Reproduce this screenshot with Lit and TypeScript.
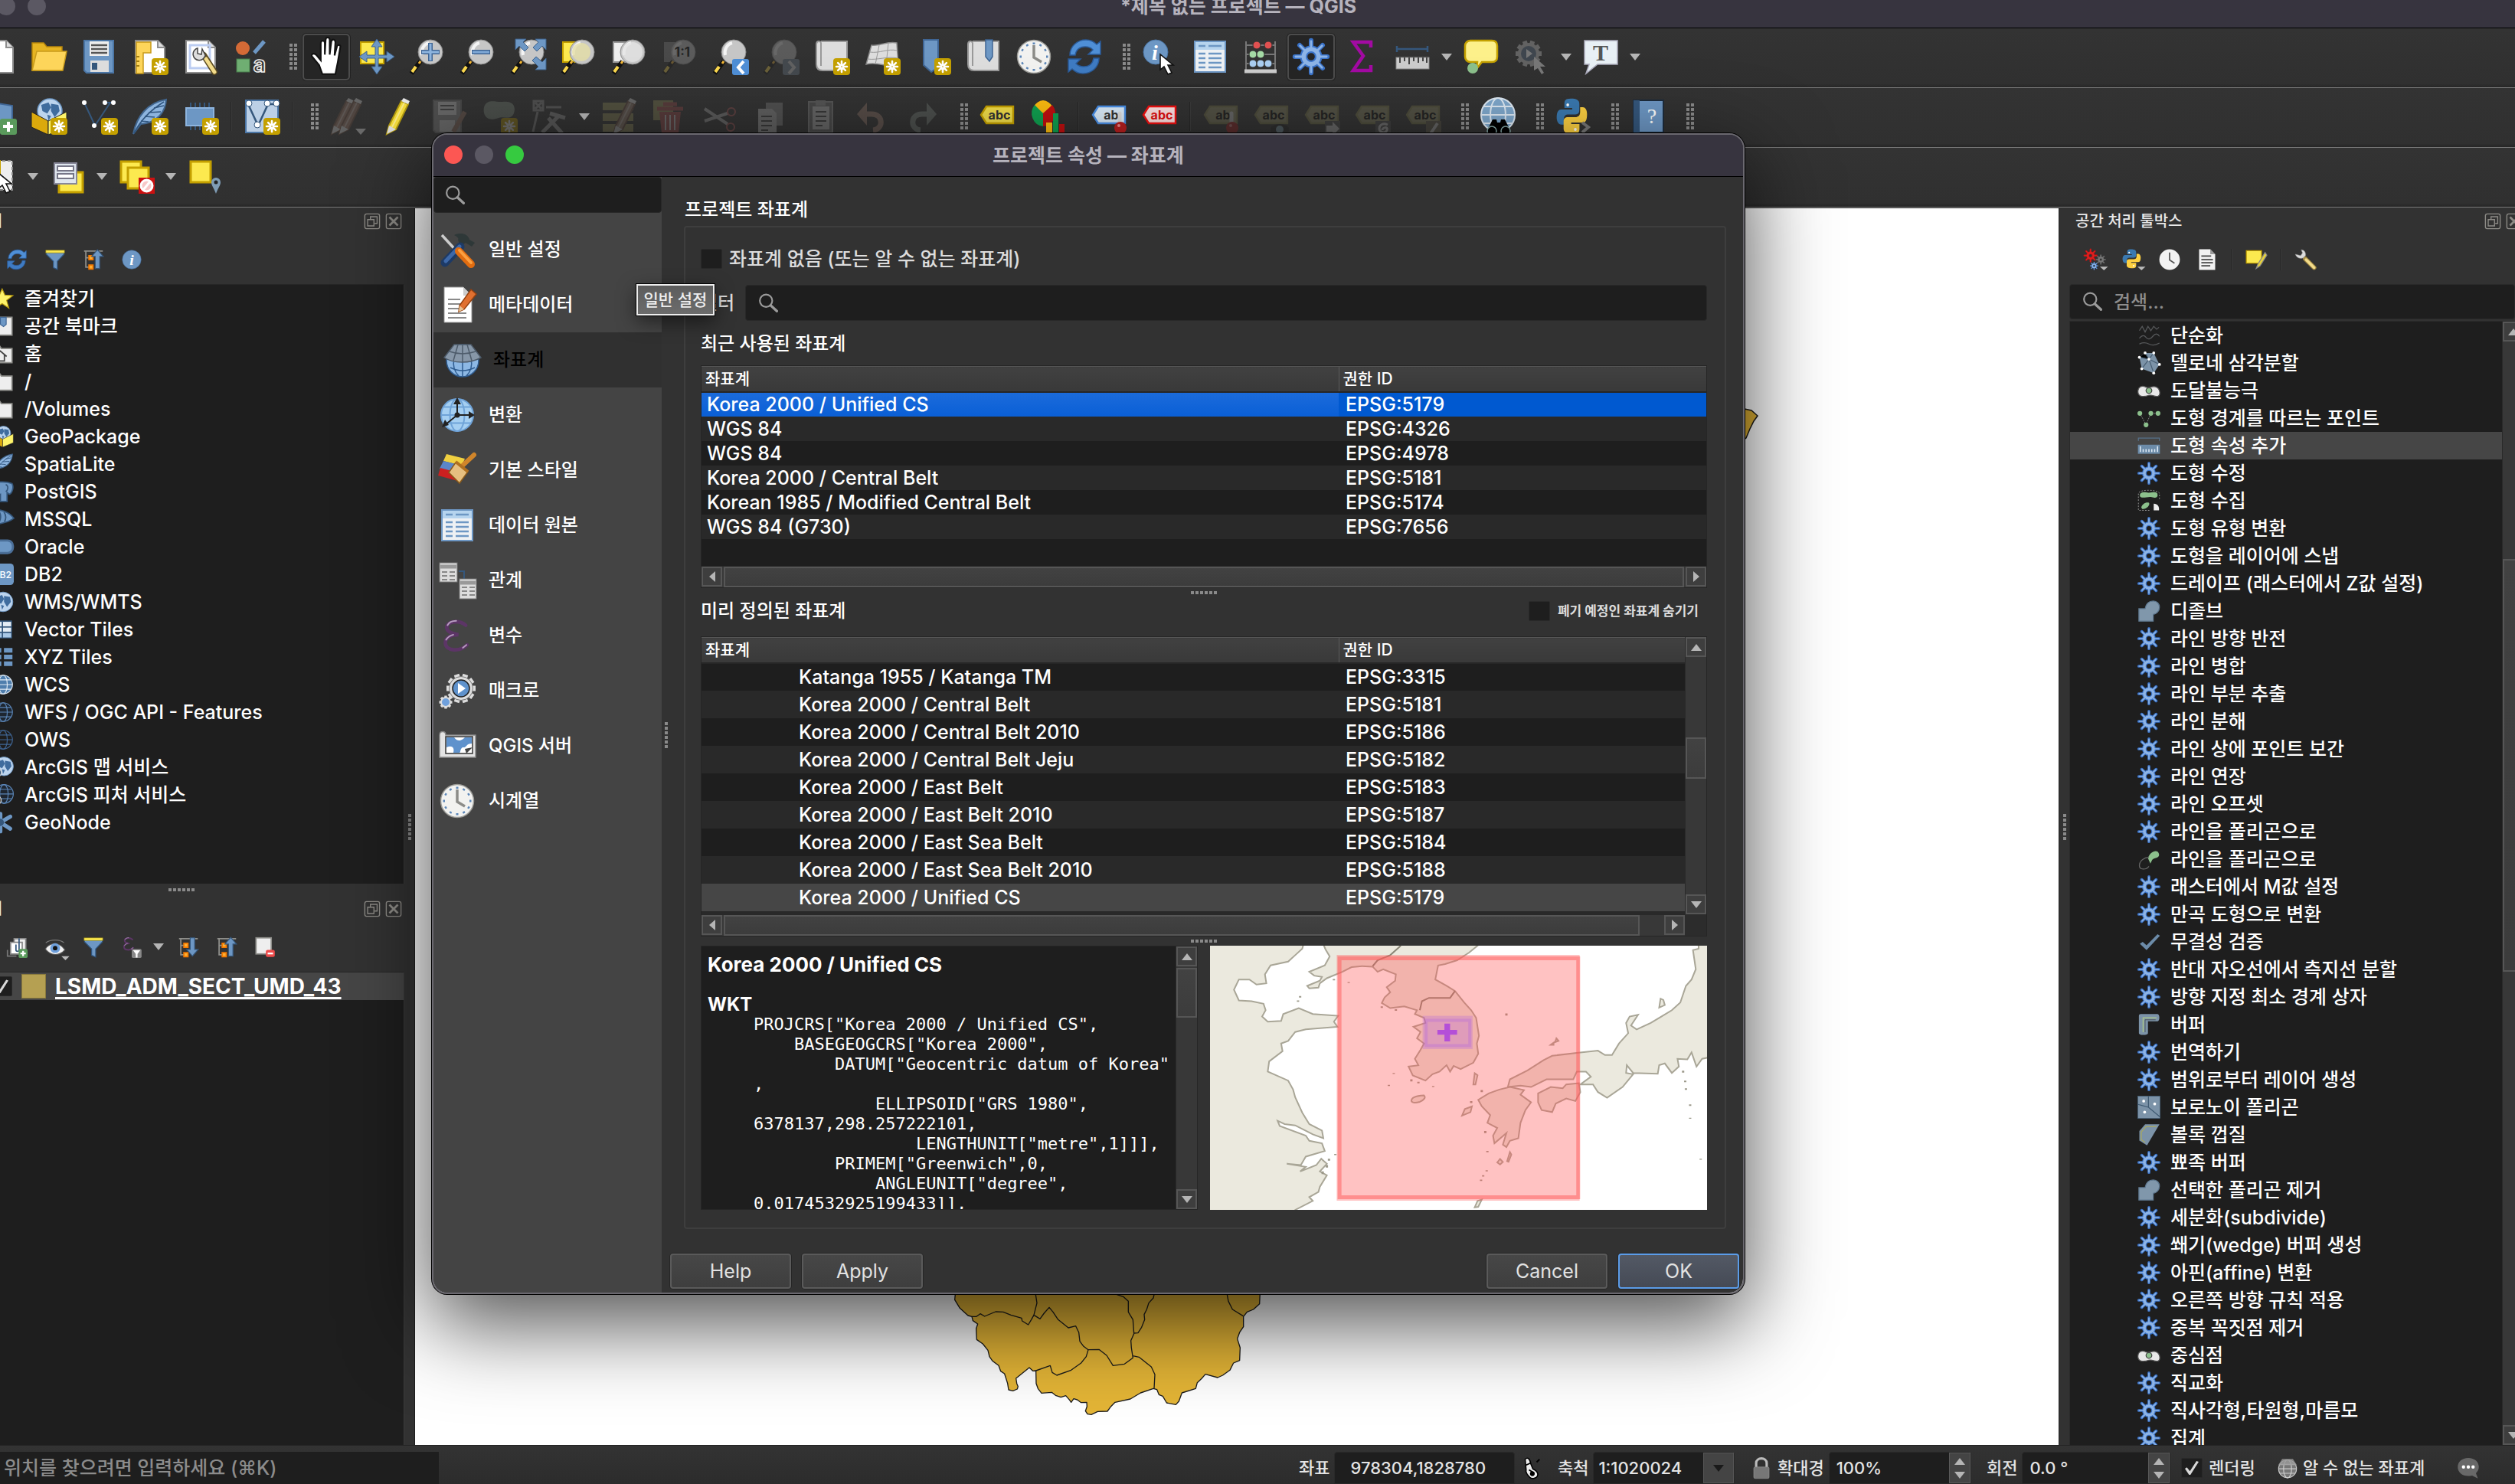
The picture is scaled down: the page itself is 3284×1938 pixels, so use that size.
import { LitElement, html, svg, css, TemplateResult } from "lit";
import { customElement, state } from "lit/decorators.js";
import { classMap } from "lit/directives/class-map.js";

type Art = ReturnType<typeof svg>;

/* ---------- shared icon parts, drawn in a 48 x 48 box ---------- */

const spokes = (cx: number, cy: number, r0: number, r1: number, n = 8): string => {
  let d = "";
  for (let i = 0; i < n; i++) {
    const a = (i * 2 * Math.PI) / n;
    d += `M${(cx + Math.cos(a) * r0).toFixed(1)},${(cy + Math.sin(a) * r0).toFixed(1)}L${(cx + Math.cos(a) * r1).toFixed(1)},${(cy + Math.sin(a) * r1).toFixed(1)}`;
  }
  return d;
};

const star = svg`<rect x="26" y="26" width="22" height="22" rx="4" fill="#c4a000"/>
  <path d="${spokes(37, 37, 2, 7)}" stroke="#fff" stroke-width="2.6" stroke-linecap="round"/>`;

const cog = (cx: number, cy: number, r: number, dark: string, light: string): Art => svg`
  <path d="${spokes(cx, cy, r * 0.5, r * 0.92)}" stroke="${dark}" stroke-width="${r * 0.26}" stroke-linecap="round"/>
  <circle cx="${cx}" cy="${cy}" r="${r * 0.42}" fill="none" stroke="${dark}" stroke-width="${r * 0.42}"/>
  <path d="${spokes(cx, cy, r * 0.5, r * 0.88)}" stroke="${light}" stroke-width="${r * 0.12}" stroke-linecap="round"/>
  <circle cx="${cx}" cy="${cy}" r="${r * 0.42}" fill="none" stroke="${light}" stroke-width="${r * 0.24}"/>`;

const lens = svg`<path d="M3 46L15 30" stroke="#111" stroke-width="6"/>
  <path d="M4 44L9 37" stroke="#fcd94f" stroke-width="4"/><path d="M13 33l2-3" stroke="#f5b836" stroke-width="3"/>
  <ellipse cx="28" cy="18" rx="16" ry="16" fill="#c6c6c6" stroke="#8b8b8b"/>
  <path d="M17 22a12 13 0 0 1 9-16" stroke="#f4f4f4" stroke-width="4" fill="none"/>`;

const page = svg`<path d="M5 3h29l9 9v33H5z" fill="#fff" stroke="#8d8d8d" stroke-width="2"/><path d="M34 3v9h9" fill="#ddd" stroke="#8d8d8d" stroke-width="2"/>`;

const pointer = (x: number, y: number): Art => svg`<path transform="translate(${x} ${y})" d="M0 0v20l5-4 5 10 5-2-5-10h7z" fill="#fff" stroke="#111" stroke-width="1.6"/>`;

const tag = (fill: string, edge: string, ink: string, word: string): Art => svg`
  <path d="M3 22l7-11h35v22H10z" fill="${fill}" stroke="${edge}" stroke-width="2.4"/>
  <text x="27" y="28" text-anchor="middle" font-size="16" font-weight="700" fill="${ink}">${word}</text>`;

const pin = svg`<path d="M38 20v14" stroke="#ddd" stroke-width="5" stroke-linecap="round"/><circle cx="39" cy="39" r="8" fill="#b81f1f"/><circle cx="37" cy="36" r="2" fill="#ee8a8a"/>`;

const globe = (cx: number, cy: number, r: number, fill: string, line: string): Art => svg`
  <circle cx="${cx}" cy="${cy}" r="${r}" fill="${fill}" stroke="${line}" stroke-width="2"/>
  <ellipse cx="${cx}" cy="${cy}" rx="${r * 0.45}" ry="${r}" fill="none" stroke="${line}" stroke-width="2"/>
  <path d="M${cx - r} ${cy}h${2 * r}M${cx - r * 0.85} ${cy - r * 0.5}h${r * 1.7}M${cx - r * 0.85} ${cy + r * 0.5}h${r * 1.7}" stroke="${line}" stroke-width="2"/>`;

const earth = (cx: number, cy: number, r: number): Art => svg`
  <circle cx="${cx}" cy="${cy}" r="${r}" fill="#bcd4ee" stroke="#6d97c4" stroke-width="1.5"/>
  <path d="M${cx - r * 0.7} ${cy - r * 0.5}l${r * 0.6} ${-r * 0.2} ${r * 0.2} ${r * 0.4} ${-r * 0.3} ${r * 0.5} ${-r * 0.4} ${-r * 0.2}zM${cx + r * 0.1} ${cy - r * 0.6}l${r * 0.6} ${r * 0.1} ${r * 0.1} ${r * 0.5} ${-r * 0.4} ${r * 0.5} ${-r * 0.3} ${-r * 0.5}zM${cx - r * 0.2} ${cy + r * 0.3}l${r * 0.3} ${r * 0.1} ${-r * 0.2} ${r * 0.4}z" fill="#3f6c9e"/>`;

const pencil = (x: number, body: string, edge: string): Art => svg`<g transform="translate(${x} 0)"><path d="M8 36L24 4l9 4-16 33-12 6z" fill="${body}" stroke="${edge}" stroke-width="2"/><path d="M24 4l9 4 2-4-8-4z" fill="#e8e8e8"/><path d="M12 38L28 6" stroke="#fff" stroke-opacity=".4" stroke-width="2"/><path d="M5 47l3-11 9 5z" fill="#ddd"/></g>`;

const feather = svg`<path d="M2 47C6 25 20 6 45 2 44 18 34 32 12 34z" fill="#8db4de" stroke="#41668f" stroke-width="2"/><path d="M3 46C12 28 24 16 42 5M12 30l10 1M17 24l13 1M22 19l16-1M29 13l13-3" stroke="#2f557f" stroke-width="1.6" fill="none"/>`;

const python = svg`<path d="M23 3c-9 0-10 3-10 7v6h12v2H8c-5 0-7 5-7 11s3 10 7 10h4v-7c0-5 3-7 7-7h11c4 0 6-2 6-6v-9c0-5-5-7-13-7z" transform="translate(2 -2) scale(.94)" fill="#3a79b0"/><circle cx="19" cy="9" r="2" fill="#fff"/>
  <path d="M26 47c9 0 10-3 10-7v-6H24v-2h17c5 0 6-5 6-11s-3-9-6-9h-4v6c0 5-3 7-7 7H19c-4 0-6 2-6 6v9c0 5 5 7 13 7z" fill="#fdd041"/><circle cx="30" cy="41" r="2" fill="#fff"/>`;

const cycle = svg`<path d="M5 22C5 10 15 2 26 2c7 0 11 3 14 6l5-4v17H29l6-6c-3-3-6-4-10-4-8 0-12 5-13 11z" fill="#4f8fd6" stroke="#2a5a98" stroke-width="1.5"/>
  <path d="M43 26c0 12-10 20-21 20-7 0-11-3-14-6l-5 4V27h16l-6 6c3 3 6 4 10 4 8 0 12-5 13-11z" fill="#3f7bc2" stroke="#2a5a98" stroke-width="1.5"/>`;

const clock = svg`<circle cx="24" cy="24" r="21.5" fill="#f2f2f0" stroke="#9a9a96" stroke-width="1.5"/>
  <path d="${spokes(24, 24, 16, 18.5, 12)}" stroke="#5b86b8" stroke-width="3"/><path d="M24 9v16l10 6" fill="none" stroke="#8c8c88" stroke-width="3.5"/>`;

const gridTable = svg`<rect x="4" y="4" width="40" height="40" fill="#eef1f4" stroke="#6d97c4" stroke-width="2"/><rect x="5" y="5" width="38" height="10" fill="#b6d4ee"/>
  <path d="M9 10h9M22 10h17M9 20h9M22 20h17M9 26h9M22 26h17M9 32h9M22 32h17M9 38h9M22 38h17" stroke="#6d97c4" stroke-width="2.6"/>`;

const scroll = svg`<path d="M10 4h34v38H12c-6 0-8-3-8-8V8c0-5 5-5 6-2v30" fill="#ddd" stroke="#999" stroke-width="2"/>`;

const funnel = svg`<path d="M4 8h40v4L29 28v18l-9-4V28L4 12z" fill="#6d97c4" stroke="#2f557f" stroke-width="2"/><path d="M3 3h42v6H3z" fill="#fce94f" stroke="#8a7a10"/>`;

const branch = (up: boolean): Art => svg`<path d="M3 5h42M7 5v36h10M7 20h10" stroke="#8f8f8b" stroke-width="3" fill="none"/><path d="M14 15h9v9h-9zM14 36h9v9h-9z" fill="#fcb034" stroke="#f57900" stroke-width="3"/>
  ${up ? svg`<path d="M28 44V17h-8L33 2l13 15h-8v27z" fill="#6d97c4" stroke="#35577c" stroke-width="2"/>` : svg`<path d="M28 3v26h-8l13 15 13-15h-8V3z" fill="#6d97c4" stroke="#35577c" stroke-width="2"/>`}`;

const info = svg`<circle cx="24" cy="24" r="21" fill="#6d97c4" stroke="#3f6594"/><text x="24" y="36" text-anchor="middle" font-size="34" font-style="italic" font-weight="700" font-family="Liberation Serif, serif" fill="#fff">i</text>`;

const folder = svg`<path d="M2 6h14l4 6h24v32H2z" fill="#eee" stroke="#8f8f8b" stroke-width="3"/>`;
const box = svg`${earth(25, 17, 16)}<path d="M1 18l22 12v18L1 38z" fill="#dba90c" stroke="#222"/><path d="M47 18L23 30v18l24-10z" fill="#fdf36a" stroke="#222"/>`;
const blobWhite = svg`<path d="M1 27c0-12 9-14 17-10 6 3 14-4 22 0 8 4 9 18 2 19-8 1-10-4-18-2-6 2-22 6-23-7z" fill="#e8e8e8" stroke="#555" stroke-width="2"/><circle cx="24" cy="24" r="6" fill="#8cc08c" stroke="#444" stroke-width="2"/>`;
const dissolve = svg`<path d="M3 19h13C18 8 24 3 33 3c8 0 13 6 13 13 0 8-6 14-13 15v14H3z" fill="#8097ab" stroke="#5e7890" stroke-width="2"/>`;
const epsilon = svg`<path d="M38 10C28 2 12 5 12 13c0 7 9 9 16 10-10 0-18 4-18 11 0 12 20 13 30 3" fill="none" stroke="#5c3566" stroke-width="5" stroke-linecap="round"/>
  <path d="M13 10c2-4 7-6 12-6M11 30c2-3 6-6 10-7M34 41l5-4" fill="none" stroke="#b79cc0" stroke-width="2" stroke-linecap="round"/>`;

const ART: Record<string, Art> = {
  newFile: page,
  open: svg`<path d="M2 6h15l4 5h20v31H2z" fill="#e6b422" stroke="#b8860b" stroke-width="1.5"/><path d="M8 17h39l-5 25H2z" fill="#fdd55a" stroke="#c79a1b" stroke-width="1.5"/>`,
  save: svg`<path d="M4 3h38v42H7l-3-3z" fill="#6d97c4" stroke="#4b76a6" stroke-width="2"/><rect x="11" y="4" width="25" height="19" fill="#eee"/><path d="M13 9h21M13 14h21M13 19h21" stroke="#555" stroke-width="2.4"/><rect x="12" y="29" width="24" height="15" fill="#ddd"/><rect x="14" y="32" width="7" height="9" fill="#35577c"/>`,
  layout: svg`${page}<path d="M6 5h19v14H15v27H6z" fill="#fdd55a" stroke="#c79a1b" stroke-width="1.5"/><path d="M6 24h4M6 30h4M6 36h4" stroke="#a57f10" stroke-width="2"/>${star}`,
  layoutManager: svg`${page}<path d="M10 9h26v30H10z" fill="none" stroke="#bccdf2" stroke-width="3"/><path d="M28 22l14 22" stroke="#5a4a20" stroke-width="8" stroke-linecap="round"/><path d="M31 27l11 17" stroke="#f3dc8b" stroke-width="5" stroke-linecap="round"/><path d="M20 13a8 8 0 1 0 10 9l-4-8-1 7-5-1z" fill="#ddd" stroke="#444" stroke-width="1.5"/>`,
  style: svg`<circle cx="13" cy="13" r="9" fill="#d46a36"/><path d="M28 19L41 4" stroke="#6d97c4" stroke-width="5"/><rect x="5" y="27" width="17" height="17" fill="#6fae72" stroke="#477d4a"/><text x="35" y="44" text-anchor="middle" font-size="28" font-weight="700" fill="none" stroke="#eee" stroke-width="1.6">a</text>`,
  hand: svg`<path d="M16 46l-4-11-9-11c-1-4 4-4 6-1l5 6V8c0-4 5-4 5 0v14l1-18c0-4 5-4 5 0v18l2-16c1-4 5-3 5 1l-1 16 3-11c1-3 5-2 4 1l-3 18-3 15z" transform="translate(2 -2) scale(1.06)" fill="#fff" stroke="#111" stroke-width="2"/>`,
  panSelection: svg`<rect x="3" y="5" width="30" height="28" fill="#fce94f" stroke="#c4a000" stroke-width="2"/><path d="M24 1l7 10h-5v11h11v-5l10 7-10 7v-5H26v11h5l-7 10-7-10h5V26H11v5L1 24l10-7v5h11V11h-5z" fill="#6d97c4" stroke="#3d618a"/>`,
  zoomIn: svg`${lens}<path d="M28 6v24M16 18h24" stroke="#3f6594" stroke-width="6"/><path d="M28 7v22M17 18h22" stroke="#8db4de" stroke-width="3"/>`,
  zoomOut: svg`${lens}<path d="M16 18h24" stroke="#3f6594" stroke-width="6"/><path d="M17 18h22" stroke="#7fa8d6" stroke-width="3"/>`,
  zoomFull: svg`${lens}<path d="M7 1h14l-4 4 7 7-5 5-7-7-5 5zM47 1v14l-5-5-7 7-5-5 7-7-4-4zM47 41H33l4-4-8-8 5-5 8 7 5-5z" fill="#6d97c4" stroke="#3d618a"/>`,
  zoomSelection: svg`<rect x="3" y="5" width="22" height="26" fill="#fce94f" stroke="#c4a000" stroke-width="2"/>${lens}<circle cx="27" cy="18" r="12" fill="#e5dfa6" opacity=".8"/>`,
  zoomLayer: svg`<rect x="3" y="5" width="22" height="26" fill="#eee" stroke="#999" stroke-width="2"/>${lens}<circle cx="28" cy="18" r="13" fill="#e4e4e4" opacity=".8"/>`,
  zoomNative: svg`<rect x="3" y="5" width="22" height="26" fill="#888"/>${lens}<text x="27" y="24" text-anchor="middle" font-size="17" font-weight="700" fill="#000">1:1</text>`,
  zoomLast: svg`${lens}<rect x="26" y="27" width="22" height="21" rx="3" fill="#4f8fd6"/><path d="M41 30l-7 8 7 8" fill="none" stroke="#fff" stroke-width="4"/>`,
  zoomNext: svg`${lens}<rect x="26" y="27" width="22" height="21" rx="3" fill="#789"/><path d="M34 30l7 8-7 8" fill="none" stroke="#ddd" stroke-width="4"/>`,
  newMap: svg`${scroll}${star}`,
  new3d: svg`<path d="M3 34L10 9c10 2 20-6 33-3l2 30c-14 3-26-6-42-2z" fill="#ddd" stroke="#888" stroke-width="1.5"/><path d="M8 18c12 2 24-5 35-2M5 27c12 2 26-4 39-1M20 9l-5 25M32 6l-3 29" stroke="#999" fill="none"/>${star}`,
  newBookmark: svg`<path d="M12 2h19v36l-9 6-10-9z" fill="#6d97c4" stroke="#3f6594" stroke-width="2"/>${star}`,
  bookmarks: svg`${scroll}<path d="M27 2h9v22l-4 6-5-6z" fill="#6d97c4" stroke="#3f6594" stroke-width="1.5"/>`,
  clock,
  refresh: cycle,
  identify: svg`<circle cx="19" cy="18" r="16" fill="#6d97c4" stroke="#4b76a6"/><text x="18" y="28" text-anchor="middle" font-size="28" font-style="italic" font-weight="700" font-family="Liberation Serif, serif" fill="#fff">i</text>${pointer(25, 21)}`,
  table: gridTable,
  abacus: svg`<path d="M5 4v40M43 4v40M5 9h38M5 21h38M5 33h38" stroke="#777" stroke-width="2"/><g stroke="#333"><circle cx="19" cy="9" r="5" fill="#e05050"/><circle cx="34" cy="9" r="5" fill="#e05050"/><circle cx="14" cy="21" r="5" fill="#a5dba5"/><circle cx="24" cy="21" r="5" fill="#a5dba5"/><circle cx="14" cy="33" r="5" fill="#a9cdf0"/><circle cx="24" cy="33" r="5" fill="#a9cdf0"/><circle cx="34" cy="33" r="5" fill="#a9cdf0"/></g><path d="M3 43h42" stroke="#ccc" stroke-width="5"/>`,
  gear: cog(24, 24, 23, "#3a73c9", "#8db4e6"),
  sigma: svg`<path d="M36 12V5H13l13 18-13 19h23v-7" fill="none" stroke="#a30aa3" stroke-width="4.500"/>`,
  measure: svg`<path d="M4 10v8M44 10v8M4 14h40" stroke="#35577c" stroke-width="2.5"/><rect x="3" y="25" width="43" height="15" fill="#ccc" stroke="#888"/><path d="M8 25v7M14 25v5M20 25v9M26 25v5M32 25v7M38 25v5M43 25v7" stroke="#444" stroke-width="2"/>`,
  tips: svg`<path d="M10 3h28c5 0 7 3 7 7v14c0 5-3 7-7 7H25l-7 9 1-9h-9c-4 0-7-3-7-7V10c0-4 3-7 7-7z" fill="#fdf08a" stroke="#c4a000" stroke-width="2.5"/><circle cx="13" cy="39" r="7" fill="#8cc08c"/>`,
  action: svg`<path d="${spokes(20, 20, 12, 17, 10)}" stroke="#626262" stroke-width="6"/><circle cx="20" cy="20" r="14" fill="#626262"/><circle cx="20" cy="20" r="10" fill="#3f464e"/><path d="M17 14l8 6-8 6z" fill="#767676"/><path d="M27 24v18l5-3 5 8 3-2-5-8h7z" fill="#777"/>`,
  annotate: svg`<path d="M3 3h43v31H20L5 46l4-12H3z" fill="#e8f0f5" stroke="#aab" stroke-width="1.5"/><text x="24" y="29" text-anchor="middle" font-size="30" font-weight="700" font-family="Liberation Serif, serif" fill="#555">T</text>`,
  addLayer: svg`<path d="M2 4l40 6v30L2 34z" fill="#6d97c4" stroke="#3f6594" stroke-width="2"/><circle cx="26" cy="38" r="8" fill="#d0612f"/><rect x="26" y="27" width="22" height="21" rx="3" fill="#5a9a5c"/><path d="M37 31v13M30 37h13" stroke="#fff" stroke-width="4"/>`,
  geopackage: svg`${box}${star}`,
  shape: svg`<path d="M4 6l14 30L38 6M31 6h8" stroke="#35577c" stroke-width="2" fill="none"/><g fill="#fff"><circle cx="4" cy="6" r="3"/><circle cx="31" cy="6" r="3"/><circle cx="42" cy="6" r="3"/><circle cx="17" cy="36" r="3"/></g>${star}`,
  featherNew: svg`${feather}${star}`,
  memory: svg`<path d="M11 6v36M17 6v36M23 6v36M29 6v36M35 6v36" stroke="#35577c" stroke-width="2"/><rect x="5" y="13" width="36" height="23" fill="#6d97c4" stroke="#8db4de" stroke-width="2"/>${star}`,
  virtual: svg`<rect x="3" y="3" width="42" height="42" fill="#bcd0e6" stroke="#4b76a6" stroke-width="2"/><path d="M5 6l14 30L32 8h12" stroke="#35577c" stroke-width="2.5" fill="none"/><g fill="#fff" stroke="#35577c"><circle cx="7" cy="7" r="4"/><circle cx="31" cy="7" r="4"/><circle cx="43" cy="7" r="4"/><circle cx="18" cy="35" r="4"/></g>${star}`,
  pencils: svg`${pencil(-2, "#a07a68", "#705040")}${pencil(8, "#a07a68", "#705040")}<path d="M34 40h14l-7 8z" fill="#fff"/>`,
  pencil: pencil(4, "#f4dc3c", "#b39b10"),
  saveEdits: svg`<path d="M4 3h36v42H7l-3-3z" fill="#999" stroke="#777" stroke-width="2"/><rect x="10" y="5" width="24" height="17" fill="#eee"/><path d="M13 10h18M13 15h18" stroke="#555" stroke-width="2"/><rect x="12" y="29" width="20" height="15" fill="#ddd"/><path d="M45 18L30 44" stroke="#a07a68" stroke-width="6"/>`,
  addBlob: svg`<path d="M4 12C8 0 20 6 28 5c14-2 18 6 15 15-4 10-14 3-20 6C8 32 2 22 4 12z" fill="#889688"/>${star}`,
  vertex: svg`<path d="M5 6l8 8M13 6l-8 8M3 4h12v12H3zM19 12h20M8 18L2 44" stroke="#999" stroke-width="3" fill="none"/><path d="M14 45l22-22M24 20l20 6M22 26l18 20" stroke="#aaa" stroke-width="5" fill="none"/>`,
  multiEdit: svg`<path d="M3 6h40v10H3zM3 20h40v10H3zM3 34h40v10H3z" fill="#a09a60"/>${pencil(12, "#a58a78", "#705040")}`,
  trash: svg`<path d="M3 3h26v26H3z" fill="#a09a60"/><path d="M8 14h34M16 8h18" stroke="#b05050" stroke-width="5"/><path d="M11 18h28l-3 28H14z" fill="#b05050"/><path d="M19 22v20M25 22v20M31 22v20" stroke="#ddd" stroke-width="2"/>`,
  cut: svg`<path d="M4 14l30 20M4 30l30-10" stroke="#bbb" stroke-width="4"/><circle cx="39" cy="18" r="5" fill="none" stroke="#c06060" stroke-width="2"/><circle cx="38" cy="38" r="5" fill="none" stroke="#c06060" stroke-width="2"/>`,
  copy: svg`<path d="M18 6h22v30H18z" fill="#999"/><path d="M8 14h18l6 6v26H8z" fill="#ccc"/><path d="M12 24h14M12 30h14M12 36h14M12 42h9" stroke="#444" stroke-width="2"/>`,
  paste: svg`<path d="M8 5h31v40H8z" fill="#777" stroke="#aaa" stroke-width="2"/><path d="M13 11h22v30H13z" fill="#ddd"/><path d="M17 3h13v7H17z" fill="#aaa"/><path d="M17 18h14M17 24h14M17 30h14M17 36h9" stroke="#444" stroke-width="2"/>`,
  undo: svg`<path d="M18 6v30L5 21z" fill="#b08c7c"/><path d="M14 21h10c16 0 16 20 2 21" fill="none" stroke="#b08c7c" stroke-width="7"/>`,
  redo: svg`<path d="M30 6v30l13-15z" fill="#8c9890"/><path d="M34 21H24c-16 0-16 20-2 21" fill="none" stroke="#8c9890" stroke-width="7"/>`,
  label: tag("#f0dc4a", "#c4a000", "#333", "abc"),
  diagram: svg`<path d="M18 20V3a16 17 0 0 0-12 8zM18 20V3a16 17 0 0 1 12 8z" fill="#fdbc10"/><path d="M18 20L7 9a16 17 0 0 0 11 28z" fill="#10a050"/><path d="M18 20L30 9a16 17 0 0 1-12 28z" fill="#c01010"/><rect x="22" y="32" width="8" height="16" fill="#fdbc10"/><rect x="31" y="20" width="7" height="28" fill="#10a050"/><rect x="39" y="34" width="7" height="14" fill="#c01010"/>`,
  labelPin: svg`${tag("#dcecfa", "#4a90e8", "#333", "ab")}${pin}`,
  labelRed: tag("#fde0e0", "#f01010", "#e01010", "abc"),
  labelPin2: svg`${tag("#a09c70", "#8c8850", "#000", "ab")}${pin}`,
  labelEye: svg`${tag("#a09c70", "#8c8850", "#000", "abc")}<ellipse cx="35" cy="41" rx="12" ry="7" fill="#222"/><circle cx="35" cy="41" r="5" fill="#8ab"/>`,
  labelMove: svg`${tag("#a09c70", "#8c8850", "#000", "abc")}<rect x="28" y="30" width="20" height="20" fill="#555"/><path d="M30 36h8v-5l9 9-9 9v-5h-8z" fill="#ddd"/>`,
  labelRotate: svg`${tag("#a09c70", "#8c8850", "#000", "abc")}<rect x="28" y="30" width="20" height="20" fill="#555"/><path d="M44 35c-6-3-11 0-11 5s8 7 10 2-6-4-6 0" fill="none" stroke="#ddd" stroke-width="3"/>`,
  labelEdit: svg`${tag("#a09c70", "#8c8850", "#000", "abc")}<rect x="28" y="30" width="20" height="20" fill="#6b6650"/><path d="M33 48l10-15" stroke="#ddd" stroke-width="4"/>`,
  metasearch: svg`${globe(24, 22, 22, "#7fa8cc", "#dfeaf5")}<path d="M10 42l7-14h5l1 4h4l1-4h5l7 14v4H10z" fill="#000"/><circle cx="16" cy="43" r="6" fill="#000" stroke="#8aa" stroke-width="1.5"/><circle cx="34" cy="43" r="6" fill="#000" stroke="#8aa" stroke-width="1.5"/>`,
  pythonConsole: svg`<g transform="scale(.9 1)">${python}</g><path d="M36 32l8 6-8 7" fill="none" stroke="#777" stroke-width="4"/>`,
  help: svg`<rect x="5" y="3" width="39" height="42" fill="#6d97c4" stroke="#1d2c3d" stroke-width="2"/><rect x="5" y="3" width="8" height="42" fill="#35577c"/><text x="29" y="33" text-anchor="middle" font-size="28" font-family="Liberation Serif, serif" fill="#fff">?</text>`,
  selectArea: svg`<path d="M8 4h34v38H8z" fill="#eee" stroke="#888" stroke-width="2" stroke-dasharray="4 3"/><path d="M8 4h18v28H8z" fill="#fce94f" stroke="#c4a000" stroke-width="2"/>${pointer(24, 20)}`,
  selectForm: svg`<rect x="13" y="19" width="31" height="26" fill="#fce94f" stroke="#c4a000" stroke-width="3"/><rect x="7" y="7" width="29" height="27" fill="#dfe6ee" stroke="#889" stroke-width="2"/><path d="M11 11h21v6H11zM11 21h21v6H11z" fill="#fff" stroke="#778" stroke-width="2"/>`,
  deselect: svg`<rect x="4" y="5" width="26" height="27" fill="#fce94f" stroke="#c4a000" stroke-width="3"/><rect x="13" y="13" width="27" height="27" fill="#fce94f" stroke="#c4a000" stroke-width="3"/><rect x="27" y="26" width="21" height="21" fill="#cc1010"/><circle cx="37.5" cy="36.5" r="7.5" fill="#f7c8c8" stroke="#fff" stroke-width="3"/><path d="M33 42l9-11" stroke="#fff" stroke-width="3"/>`,
  selectPlace: svg`<rect x="5" y="5" width="26" height="27" fill="#fce94f" stroke="#c4a000" stroke-width="3"/><path d="M38 47c-3-8-6-11-6-15a6 6 0 0 1 12 0c0 4-3 7-6 15z" fill="#7f9cb5"/><circle cx="38" cy="32" r="2.5" fill="#222"/>`,
  filter: funnel,
  collapse: branch(true),
  expand: branch(false),
  info,
  fav: svg`<path d="M22 2l6 14 18 1-14 11 5 17-15-10L7 45l5-17L0 17l16-1z" fill="#fdf36a" stroke="#b89c10" stroke-width="2"/>`,
  mark: svg`<rect x="2" y="4" width="42" height="40" fill="#eee" stroke="#8f8f8b" stroke-width="3"/><path d="M18 4h13v16l-6 5-7-5z" fill="#6d97c4" stroke="#3f6594" stroke-width="2"/>`,
  home: svg`${folder}<path d="M4 30l14-12 14 12M9 27v13h18V27" fill="none" stroke="#444" stroke-width="3"/>`,
  folder,
  box,
  feather,
  elephant: svg`<path d="M2 6c12-5 30-5 42 0 5 8 0 22-6 24l-5-4v20H18V30C8 34 2 20 2 6z" fill="#6d97c4" stroke="#35577c" stroke-width="3"/><path d="M30 8c8 4 4 14 0 16" fill="none" stroke="#35577c" stroke-width="3"/>`,
  shell: svg`<path d="M2 4c16-3 36 4 46 18-10 8-26 12-46 14z" fill="#6d97c4" stroke="#35577c" stroke-width="3"/><path d="M14 5c6 9 5 20 0 28M26 8c5 7 5 15 1 22" fill="none" stroke="#35577c" stroke-width="3"/>`,
  oracle: svg`<rect x="-6" y="10" width="52" height="28" rx="12" fill="#6d97c4" stroke="#4b6f98" stroke-width="5"/>`,
  db2: svg`<rect x="-2" y="0" width="50" height="48" rx="8" fill="#6d97c4"/><text x="22" y="32" text-anchor="middle" font-size="21" fill="#fff">DB2</text>`,
  earth: earth(24, 24, 22),
  vtiles: svg`<rect x="2" y="4" width="42" height="40" fill="#35577c"/><g fill="#e4edf5"><rect x="5" y="7" width="16" height="10"/><rect x="24" y="7" width="18" height="10"/><rect x="5" y="20" width="16" height="9"/><rect x="24" y="20" width="18" height="9"/></g><g fill="#a9c8e6"><rect x="5" y="32" width="16" height="10"/><rect x="24" y="32" width="18" height="10"/></g>`,
  xyz: svg`<path d="M3 4h17v10H3zM26 4h19v10H26zM3 19h17v10H3zM26 19h19v10H26zM3 34h17v10H3zM26 34h19v10H26z" fill="#6d97c4"/>`,
  wcs: globe(24, 24, 21, "#4f7ead", "#dfeaf5"),
  wfs: globe(24, 24, 21, "#1e2630", "#5b86b8"),
  ows: globe(24, 24, 21, "#1e1e1e", "#3f6594"),
  arcmap: svg`${earth(26, 22, 21)}<circle cx="10" cy="36" r="10" fill="#35577c" stroke="#ccc" stroke-width="2"/>`,
  arcfeat: svg`${globe(26, 22, 21, "#1e2630", "#5b86b8")}<circle cx="10" cy="36" r="10" fill="#555" stroke="#ccc" stroke-width="2"/>`,
  geonode: svg`<path d="M18 24V5M18 24v20M18 24l22-13M18 24l22 14M18 24H-4" stroke="#6d97c4" stroke-width="9" stroke-linecap="round"/><circle cx="18" cy="24" r="8" fill="#35577c"/>`,
  addGroup: svg`<path d="M3 30v14h20" stroke="#777" stroke-width="3" fill="none"/><path d="M18 5h26v26H18z" fill="#eee" stroke="#888" stroke-width="3"/><path d="M10 13h26v26H10z" fill="#fff" stroke="#888" stroke-width="3"/><path d="M22 18v12c0 4 7 4 7 0V4" fill="none" stroke="#35577c" stroke-width="3"/><rect x="28" y="28" width="20" height="20" rx="3" fill="#5a9a5c"/><path d="M38 32v12M32 38h12" stroke="#fff" stroke-width="4"/>`,
  eye: svg`<path d="M2 28C12 12 34 12 46 30 34 44 14 44 2 28z" fill="#f2f2f2" stroke="#555" stroke-width="2"/><path d="M3 14C14 6 34 6 44 14" fill="none" stroke="#777" stroke-width="2"/><circle cx="24" cy="26" r="11" fill="#6fa0dc"/><circle cx="24" cy="26" r="5" fill="#111"/><path d="M38 44h18l-9 9z" fill="#bbb"/>`,
  exprFilter: svg`<g transform="scale(.68)">${epsilon}</g><rect x="24" y="28" width="22" height="20" rx="3" fill="#888"/><path d="M27 31h16l-6 8v8h-4v-8z" fill="#fff"/>`,
  removeLayer: svg`<rect x="4" y="3" width="34" height="36" fill="#eee" stroke="#8f8f8b" stroke-width="3"/><rect x="26" y="30" width="20" height="16" rx="4" fill="#ee4b4b"/><path d="M30 38h12" stroke="#fff" stroke-width="4"/>`,
  models: svg`${cog(15, 15, 15, "#c01515", "#e02020")}${cog(38, 24, 11, "#666", "#777")}${cog(23, 38, 9, "#4a80cc", "#8db4e6")}<path d="M36 40h18l-9 8z" fill="#bbb"/>`,
  pythonMenu: svg`<g transform="scale(.92)">${python}</g><path d="M36 40h18l-9 8z" fill="#bbb"/>`,
  plainClock: svg`<circle cx="24" cy="24" r="23" fill="#f2f2f2"/><path d="M24 8v17l11 7" fill="none" stroke="#555" stroke-width="3"/>`,
  doc: svg`<path d="M6 1h25l11 11v35H6z" fill="#f2f2f2"/><path d="M31 1v11h11z" fill="#999"/><path d="M11 16h22M11 24h26M11 31h26M11 38h20" stroke="#444" stroke-width="3"/>`,
  noteEdit: svg`<rect x="2" y="4" width="34" height="28" fill="#fce94f" stroke="#c4a000" stroke-width="2"/><path d="M44 8L28 34l-4 10 9-6 15-24z" fill="#e9d33a" stroke="#888" stroke-width="2"/>`,
  wrench: svg`<path d="M24 22l20 20" stroke="#a58c45" stroke-width="10" stroke-linecap="round"/><path d="M26 24l18 18" stroke="#f3dc8b" stroke-width="6" stroke-linecap="round"/><path d="M2 12c3 9 12 11 18 8l5-5c1-7-3-13-10-13l3 7-4 6z" fill="#ddd" stroke="#888"/>`,
  simplify: svg`<path d="M4 14l6-9 6 12 6-12 6 9 6-9 6 6 5-4M4 30q8-10 14-2t14-2 14 0M4 42q10-5 20 0t22-2" fill="none" stroke="#57595b" stroke-width="2"/>`,
  delaunay: svg`<path d="M4 12l12-9h18l12 24-12 18-25-9z" fill="#7c93a8"/><path d="M4 12l20 4L16 3M24 16L34 3M24 16l22 11M24 16l10 29M24 16L9 36" stroke="#4a6075" stroke-width="2"/><g fill="#fff"><circle cx="4" cy="12" r="3"/><circle cx="16" cy="3" r="3"/><circle cx="34" cy="3" r="3"/><circle cx="46" cy="27" r="3"/><circle cx="34" cy="45" r="3"/><circle cx="9" cy="36" r="3"/><circle cx="24" cy="16" r="3"/></g>`,
  pole: blobWhite,
  along: svg`<path d="M5 14l13 24 10-24h18" stroke="#888" stroke-width="1.5" stroke-dasharray="3 2" fill="none"/><g fill="#8cc08c"><circle cx="5" cy="14" r="5"/><circle cx="28" cy="14" r="5"/><circle cx="43" cy="14" r="5"/><circle cx="18" cy="38" r="5"/></g>`,
  ruler: svg`<path d="M2 14V8h44v6" fill="none" stroke="#56718a" stroke-width="2"/><rect x="1" y="22" width="46" height="19" fill="#6c8ba8"/><path d="M6 25v12M12 31v6M18 31v6M24 31v6M30 31v6M36 31v6M42 25v12" stroke="#dfeaf5" stroke-width="2.5"/>`,
  collect: svg`<path d="M5 13c0-8 10-8 18-6 10 0 18-4 19 4 1 8-8 7-14 5-8-1-22 5-23-3zM8 38c2-8 10-12 16-10 4 6-8 15-14 13z" fill="#8cc08c"/><path d="M34 30c8 0 12 6 11 14H34z" fill="#eee"/><path d="M2 24V8c4-8 38-8 44 0v14M2 28v16h24" fill="none" stroke="#999" stroke-width="1.5" stroke-dasharray="3 3"/>`,
  dissolve,
  bean: svg`<path d="M22 22c4-14 20-20 23-9 2 9-9 7-14 12l-4 8z" fill="#8cc08c"/><path d="M24 20c-10 0-20 8-20 17 0 10 14 10 20 2" fill="none" stroke="#666" stroke-width="2"/>`,
  valid: svg`<path d="M5 28l6-4 8 7L42 8l5 3-28 30z" fill="#6c8ba8"/>`,
  buffer: svg`<path d="M3 6c0-3 2-4 4-4h35c5 0 5 15 0 15H22v25c0 5-19 5-19 0z" fill="#7c93a8"/><path d="M12 40V10h28" fill="none" stroke="#a8c48c" stroke-width="2.5"/><path d="M16 40V14h22" fill="none" stroke="#333" stroke-width="1"/>`,
  voronoi: svg`<rect x="1" y="1" width="46" height="46" fill="#7c93a8" stroke="#4a6a85"/><path d="M1 18l22 6 24 20M23 24V1" stroke="#3f5a72" stroke-width="2" fill="none"/><g fill="#fff"><circle cx="13" cy="11" r="3"/><circle cx="36" cy="17" r="3"/><circle cx="15" cy="34" r="3"/></g>`,
  hull: svg`<path d="M16 2h30L20 46 4 36V16z" fill="#7c93a8"/><path d="M40 7H18L8 18v16l8 6" fill="none" stroke="#a8a860" stroke-width="2"/>`,
  general: svg`<path d="M4 5l22 24" stroke="#ccc" stroke-width="3.5"/><path d="M20 5c8-4 18-2 20 6l7 4-4 5-8-5-7 5-3-9c2-2-3-5-5-6z" fill="#2e3838"/><path d="M28 20L8 41" stroke="#1d3a66" stroke-width="11" stroke-linecap="round"/><path d="M27 20L9 39" stroke="#3d68a8" stroke-width="5" stroke-linecap="round"/><path d="M26 26l16 17" stroke="#e06c10" stroke-width="10" stroke-linecap="round"/><path d="M27 25l15 16" stroke="#fca040" stroke-width="4" stroke-linecap="round"/>`,
  metadata: svg`<path d="M7 1h25l11 11v35H7z" fill="#fff" stroke="#999"/><path d="M32 1v11h11z" fill="#ccc"/><path d="M12 17h16M12 23h22M12 29h20M12 35h24M12 41h24" stroke="#8a8a8a" stroke-width="2"/><path d="M42 4l7 6-16 20-7 3 1-8z" fill="#e07030" stroke="#93400f" stroke-width="1.5"/><path d="M26 33l1-8 6 5z" fill="#e8c090"/>`,
  crs: svg`<circle cx="25" cy="25" r="21" fill="#8db8e4" stroke="#2f5c90" stroke-width="1.5"/><path d="M25 22v24M9 34q16 8 32 0M14 22q-3 14 6 23M36 22q3 14-6 23" fill="none" stroke="#2f5c90" stroke-width="1.5"/><path d="M14 4h22l13 17c-14 8-36 8-48 0z" fill="#8797a8" stroke="#4e5c6b" stroke-width="1.5"/><path d="M25 4v23M19 4l-6 21M31 4l6 21M8 13q17 6 34 0" fill="none" stroke="#4e5c6b" stroke-width="1.5"/>`,
  transform: svg`${globe(24, 24, 21, "#a5cff2", "#6fa3d8")}<path d="M24 24V6M24 24h18M24 24L8 37" stroke="#222" stroke-width="2"/><path d="M24 1l5 9H19zM47 24l-8 5V19zM4 40l4-10 5 7z" fill="#222"/><circle cx="24" cy="24" r="3.5" fill="#222"/>`,
  brush: svg`<path d="M10 3l24 6-4 9L6 12z" fill="#f0d040"/><path d="M6 12l24 6-4 11L1 22z" fill="#5b86c8"/><path d="M2 21l26 7 0 11L-1 31z" fill="#cc2020"/><path d="M46 4L32 17" stroke="#d0852a" stroke-width="6" stroke-linecap="round"/><path d="M22 14l16 12-11 15-14-14z" fill="#e6bf80" stroke="#8a5a1a" stroke-width="1.5"/><path d="M22 13l16 13" stroke="#b07020" stroke-width="4"/>`,
  relations: svg`<path d="M26 12h7v12" stroke="#35577c" stroke-width="2" fill="none"/><g stroke="#777" fill="#ddd"><rect x="1" y="1" width="23" height="25"/><rect x="27" y="22" width="22" height="26"/></g><path d="M2 6h21M28 27h20" stroke="#999" stroke-width="5"/><path d="M4 13h7M14 13h7M4 18h7M14 18h7M4 23h7M14 23h7M30 33h7M40 33h7M30 38h7M40 38h7M30 43h7M40 43h7" stroke="#888" stroke-width="2"/>`,
  variables: svg`<g transform="translate(-1 1) scale(.95)">${epsilon}</g>`,
  macros: svg`<path d="${spokes(29, 21, 12, 19, 10)}" stroke="#ddd" stroke-width="7"/><circle cx="29" cy="21" r="15.5" fill="#ddd" stroke="#777"/><circle cx="29" cy="21" r="11" fill="#5f92cc" stroke="#222" stroke-width="1.5"/><path d="M25 14l10 7-10 7z" fill="#fff"/><path d="${spokes(9, 39, 5, 8.5)}" stroke="#ddd" stroke-width="3.5"/><circle cx="9" cy="39" r="6" fill="#6fa0dc" stroke="#ddd" stroke-width="2"/>`,
  server: svg`<path d="M1 10c0-6 8-6 8 0h39v29H1z" fill="#e4e4e4" stroke="#888" stroke-width="1.5"/><rect x="9" y="12" width="35" height="22" fill="#fff" stroke="#333" stroke-width="1.5"/><path d="M10 13h10c6 8 12 2 14 0h9v8c-8 0-6 6-12 5-4 3-2 6-4 7h-8c2-8-3-10-9-7z" fill="#5f92cc"/><path d="M36 34l-2-6 10-2z" fill="#444"/>`,
  mouse: svg`<path d="M12 6c6-6 10 0 12 10l4 10c8 4 12 8 10 14s-12 8-16 4-10-10-8-16z" fill="#eee" stroke="#000" stroke-width="2.5"/><path d="M14 18l9-4M20 28l10 6" stroke="#000" stroke-width="3"/><circle cx="27" cy="36" r="5" fill="#000"/><path d="M36 12l6-6" stroke="#000" stroke-width="3"/>`,
  lock: svg`<path d="M13 24V14c0-13 22-13 22 0v10" fill="none" stroke="#bbb" stroke-width="5"/><rect x="8" y="22" width="32" height="24" rx="3" fill="#777" stroke="#999"/>`,
  graticule: svg`${globe(24, 26, 20, "#777", "#ccc")}<path d="M12 4h24l9 14H3z" fill="#999" opacity=".8"/>`,
  bubble: svg`<path d="M24 3c13 0 22 8 22 19 0 6-3 10-6 13l4 11-12-6c-17 4-30-5-30-18C2 11 11 3 24 3z" fill="#686868"/><g fill="#fff"><circle cx="14" cy="22" r="3.5"/><circle cx="24" cy="22" r="3.5"/><circle cx="34" cy="22" r="3.5"/></g>`,
  search: svg`<circle cx="19" cy="18" r="15" fill="none" stroke="#9b9b9b" stroke-width="4"/><path d="M30 29l15 14" stroke="#9b9b9b" stroke-width="6" stroke-linecap="round"/>`,
  float: svg`<rect x="3" y="3" width="42" height="42" rx="5" fill="none" stroke="#8d8b86" stroke-width="3"/><path d="M19 18v-7h19v19h-7M11 19h18v18H11z" fill="none" stroke="#8d8b86" stroke-width="3"/>`,
  close: svg`<rect x="3" y="3" width="42" height="42" rx="5" fill="none" stroke="#8d8b86" stroke-width="3"/><path d="M12 12l24 24M36 12L12 36" stroke="#8d8b86" stroke-width="6"/>`,
};

const icon = (name: string, cls = "i48"): TemplateResult =>
  html`<svg class=${cls} viewBox="0 0 48 48" aria-hidden="true">${ART[name]}</svg>`;

/* ---------- data ---------- */

type Tool = [kind: "b" | "on" | "off" | "grip" | "sep" | "menu", art?: string, label?: string];

const BAR1: Tool[] = [
  ["b", "newFile", "New"], ["b", "open", "Open"], ["b", "save", "Save"], ["b", "layout", "New layout"], ["b", "layoutManager", "Layouts"], ["b", "style", "Styles"],
  ["grip"], ["on", "hand", "Pan"], ["b", "panSelection", "Pan to selection"], ["b", "zoomIn", "Zoom in"], ["b", "zoomOut", "Zoom out"], ["b", "zoomFull", "Zoom full"],
  ["b", "zoomSelection", "Zoom to selection"], ["b", "zoomLayer", "Zoom to layer"], ["off", "zoomNative", "Native zoom"], ["b", "zoomLast", "Zoom last"], ["off", "zoomNext", "Zoom next"],
  ["b", "newMap", "New map view"], ["b", "new3d", "New 3D view"], ["b", "newBookmark", "New bookmark"], ["b", "bookmarks", "Bookmarks"], ["b", "clock", "Temporal"], ["b", "refresh", "Refresh"],
  ["grip"], ["b", "identify", "Identify"], ["b", "table", "Attributes"], ["b", "abacus", "Calculator"], ["on", "gear", "Processing"], ["b", "sigma", "Statistics"], ["b", "measure", "Measure"], ["menu"],
  ["b", "tips", "Map tips"], ["b", "action", "Action"], ["menu"], ["b", "annotate", "Annotation"], ["menu"],
];

const BAR2: Tool[] = [
  ["b", "addLayer", "Add layer"], ["b", "geopackage", "New GeoPackage"], ["b", "shape", "New shapefile"], ["b", "featherNew", "New SpatiaLite"], ["b", "memory", "New scratch layer"], ["sep"],
  ["b", "virtual", "New virtual layer"], ["sep"], ["grip"], ["off", "pencils", "Current edits"], ["b", "pencil", "Toggle editing"], ["off", "saveEdits", "Save edits"], ["off", "addBlob", "Add feature"],
  ["off", "vertex", "Vertex tool"], ["menu"], ["off", "multiEdit", "Modify"], ["off", "trash", "Delete"], ["off", "cut", "Cut"], ["off", "copy", "Copy"], ["off", "paste", "Paste"], ["off", "undo", "Undo"], ["off", "redo", "Redo"],
  ["grip"], ["b", "label", "Labels"], ["b", "diagram", "Diagrams"], ["sep"], ["b", "labelPin", "Pin"], ["b", "labelRed", "Unplaced"], ["sep"],
  ["off", "labelPin2", "Pin labels"], ["off", "labelEye", "Show labels"], ["off", "labelMove", "Move label"], ["off", "labelRotate", "Rotate label"], ["off", "labelEdit", "Change label"],
  ["grip"], ["b", "metasearch", "MetaSearch"], ["grip"], ["b", "pythonConsole", "Python"], ["grip"], ["b", "help", "Help"], ["grip"],
];

const BAR3: Tool[] = [
  ["b", "selectArea", "Select"], ["menu"], ["b", "selectForm", "Select by value"], ["menu"], ["b", "deselect", "Deselect"], ["menu"], ["b", "selectPlace", "Select by location"],
];

const BROWSER: [string, string][] = [
  ["fav", "즐겨찾기"], ["mark", "공간 북마크"], ["home", "홈"], ["folder", "/"], ["folder", "/Volumes"], ["box", "GeoPackage"], ["feather", "SpatiaLite"],
  ["elephant", "PostGIS"], ["shell", "MSSQL"], ["oracle", "Oracle"], ["db2", "DB2"], ["earth", "WMS/WMTS"], ["vtiles", "Vector Tiles"], ["xyz", "XYZ Tiles"],
  ["wcs", "WCS"], ["wfs", "WFS / OGC API - Features"], ["ows", "OWS"], ["arcmap", "ArcGIS 맵 서비스"], ["arcfeat", "ArcGIS 피처 서비스"], ["geonode", "GeoNode"],
];

const TOOLBOX: [string, string][] = [
  ["simplify", "단순화"], ["delaunay", "델로네 삼각분할"], ["pole", "도달불능극"], ["along", "도형 경계를 따르는 포인트"], ["ruler", "도형 속성 추가"],
  ["gear", "도형 수정"], ["collect", "도형 수집"], ["gear", "도형 유형 변환"], ["gear", "도형을 레이어에 스냅"], ["gear", "드레이프 (래스터에서 Z값 설정)"],
  ["dissolve", "디졸브"], ["gear", "라인 방향 반전"], ["gear", "라인 병합"], ["gear", "라인 부분 추출"], ["gear", "라인 분해"], ["gear", "라인 상에 포인트 보간"],
  ["gear", "라인 연장"], ["gear", "라인 오프셋"], ["gear", "라인을 폴리곤으로"], ["bean", "라인을 폴리곤으로"], ["gear", "래스터에서 M값 설정"],
  ["gear", "만곡 도형으로 변환"], ["valid", "무결성 검증"], ["gear", "반대 자오선에서 측지선 분할"], ["gear", "방향 지정 최소 경계 상자"], ["buffer", "버퍼"],
  ["gear", "번역하기"], ["gear", "범위로부터 레이어 생성"], ["voronoi", "보로노이 폴리곤"], ["hull", "볼록 껍질"], ["gear", "뾰족 버퍼"],
  ["dissolve", "선택한 폴리곤 제거"], ["gear", "세분화(subdivide)"], ["gear", "쐐기(wedge) 버퍼 생성"], ["gear", "아핀(affine) 변환"],
  ["gear", "오른쪽 방향 규칙 적용"], ["gear", "중복 꼭짓점 제거"], ["pole", "중심점"], ["gear", "직교화"], ["gear", "직사각형,타원형,마름모"], ["gear", "집계"],
];

const SECTIONS: [string, string][] = [
  ["general", "일반 설정"], ["metadata", "메타데이터"], ["crs", "좌표계"], ["transform", "변환"], ["brush", "기본 스타일"], ["table", "데이터 원본"],
  ["relations", "관계"], ["variables", "변수"], ["macros", "매크로"], ["server", "QGIS 서버"], ["clock", "시계열"],
];

const RECENT: [string, string][] = [
  ["Korea 2000 / Unified CS", "EPSG:5179"], ["WGS 84", "EPSG:4326"], ["WGS 84", "EPSG:4978"], ["Korea 2000 / Central Belt", "EPSG:5181"],
  ["Korean 1985 / Modified Central Belt", "EPSG:5174"], ["WGS 84 (G730)", "EPSG:7656"],
];

const PREDEFINED: [string, string][] = [
  ["Katanga 1955 / Katanga TM", "EPSG:3315"], ["Korea 2000 / Central Belt", "EPSG:5181"], ["Korea 2000 / Central Belt 2010", "EPSG:5186"],
  ["Korea 2000 / Central Belt Jeju", "EPSG:5182"], ["Korea 2000 / East Belt", "EPSG:5183"], ["Korea 2000 / East Belt 2010", "EPSG:5187"],
  ["Korea 2000 / East Sea Belt", "EPSG:5184"], ["Korea 2000 / East Sea Belt 2010", "EPSG:5188"], ["Korea 2000 / Unified CS", "EPSG:5179"],
];

const WKT = [
  'PROJCRS["Korea 2000 / Unified CS",',
  '    BASEGEOGCRS["Korea 2000",',
  '        DATUM["Geocentric datum of Korea"',
  ",",
  '            ELLIPSOID["GRS 1980",',
  "6378137,298.257222101,",
  '                LENGTHUNIT["metre",1]]],',
  '        PRIMEM["Greenwich",0,',
  '            ANGLEUNIT["degree",',
  "0.0174532925199433]],",
].join("\n");

/* District polygons of the loaded layer. */
const DISTRICTS = svg`
  <g transform="translate(658 1388) scale(.33333)" stroke="#1c1c1c" stroke-width="4" stroke-linejoin="round">
    <path fill="#e4b536" d="M145 60L140 112 160 145 192 174 207 178 211 194 230 207 224 225 226 268 250 285 270 310 276 335 288 352 312 370 320 392 335 402 347 440 351 465 368 469 385 462 388 452 383 440 380 420 395 408 432 378 446 391 458 390 459 440 466 460 480 478 520 475 535 487 556 494 575 488 590 505 596 514 606 500 620 504 635 515 657 514 658 530 652 548 660 560 675 562 700 550 738 549 752 530 768 514 828 501 868 477 918 460 932 464 940 484 955 490 970 516 1006 523 1018 510 1030 477 1084 460 1090 437 1108 420 1122 404 1170 417 1190 408 1218 388 1232 360 1256 350 1258 300 1247 265 1256 240 1271 218 1271 178 1285 160 1310 150 1334 128 1337 60z"/>
    <path fill="none" d="M207 178L225 178 240 167 257 177 300 159 330 160 360 172 402 184 404 195 428 210 440 190 450 172M457 60V92L462 125 450 172 474 187 490 165 510 142 525 160 545 190 585 222 614 215 626 240 630 275 645 295 663 308 655 335 635 360 596 388 540 408 522 397 514 370 458 390M663 308L705 307 735 330 760 370 805 364 838 340 832 300 830 272 842 245 838 190 820 160 820 118 800 100 775 92M842 243L858 242 872 220 884 190 882 170 892 150 900 125 918 105 921 92M838 332L862 337 910 375 924 405 921 460M1207 92L1212 118 1228 150 1270 176"/>
  </g>
  <path d="M1700 260L1736 262 1745 264 1753 271 1748 278 1743 288 1738 300 1730 306z" fill="#e4b536" stroke="#1c1c1c" stroke-width="1.5"/>`;

/* Coastlines of the extent preview. */
const COAST = svg`
  <g fill="#ebe9de" stroke="#a9a697" stroke-width="2">
    <path vector-effect="non-scaling-stroke" d="M770 30H918L915 60 905 85 895 110 870 125 862 160 864 195 850 200 840 180 825 180 818 220 825 262 843 265 860 275 863 300 858 325 866 345 885 342 888 315 910 292 930 315 966 322 960 345 965 365 920 375 905 385 895 420 885 430 887 460 868 500 866 540 895 575 902 610 905 640 915 700 925 745 943 770 945 800 930 785 905 750 890 745 880 732 883 752 920 790 925 810 943 820 947 850 920 872 913 905 893 900 920 912 912 930 935 905 942 880 950 900 940 930 950 945 940 990 938 1010 925 1030 930 1045 905 1080V1100H770z"/>
    <path vector-effect="non-scaling-stroke" d="M943 30L948 62 954 90 947 125 925 150 932 165 943 170 940 185 922 205 925 215 938 212 940 195 950 175 972 150 985 132 1000 128 1015 130 1022 150 1030 140 1048 160 1047 185 1035 210 1040 230 1032 250 1028 272 1040 292 1060 285 1078 300 1075 315 1088 330 1090 350 1073 365 1083 385 1078 410 1088 430 1083 455 1075 490 1080 515 1066 520 1072 555 1090 575 1100 550 1110 540 1120 515 1125 540 1130 518 1140 530 1158 505 1165 470 1163 430 1166 400 1162 330 1155 300 1145 270 1132 225 1120 205 1104 180 1108 125 1118 120 1135 105 1152 75 1172 30z"/>
    <path vector-effect="non-scaling-stroke" d="M1500 30H1478L1478 60 1470 65 1474 140 1468 180 1460 205 1452 270 1440 300 1425 325 1410 350 1390 375 1382 360 1392 318 1380 325 1375 350 1378 390 1365 430 1355 475 1345 475 1335 458 1310 465 1270 478 1258 495 1235 535 1210 570 1207 600 1225 595 1240 600 1262 570 1300 570 1305 540 1318 540 1325 560 1310 590 1328 590 1335 620 1348 642 1370 600 1385 550 1375 545 1376 515 1385 545 1420 548 1422 515 1430 508 1440 545 1450 520 1448 490 1462 492 1468 465 1475 520 1483 490 1500 480z"/>
    <path vector-effect="non-scaling-stroke" d="M1250 625L1268 600 1285 605 1290 590 1308 585 1310 620 1303 655 1290 645 1275 665 1270 698 1255 690 1250 660z"/>
    <path vector-effect="non-scaling-stroke" d="M1165 650L1180 625 1195 610 1210 600 1230 612 1225 630 1240 660 1232 690 1225 740 1222 800 1210 810 1205 835 1200 825 1205 780 1188 820 1186 790 1192 760 1178 740 1182 710 1170 675z"/>
    <path vector-effect="non-scaling-stroke" d="M1070 655q0-20 18-22 4 12-6 25-10 8-12-3zM1158 590l2-44 4 8-3 36zM1142 712l4-26 10-10-2 22zM1422 290l2-35 4 5 2 20zM1192 895l4-14 4 12-4 10zM1206 890l4-36 2 10-4 28zM1160 1070l4-25 6-5-5 28zM1268 435l4-8v8zM1274 425l2-15 3 10z"/>
  </g>
  <path vector-effect="non-scaling-stroke" d="M1055 48L1040 85 1022 105 1015 128M1082 300L1085 265 1095 252 1125 252 1132 225" fill="none" stroke="#8b8878" stroke-width="2"/>
  <path vector-effect="non-scaling-stroke" d="M912 245v6M909 262v5M960 178v5M981 190v4M1028 285v6M1048 296v6M1045 545v4M1038 592v4M1101 596v4M1070 570v8M1080 580v6M1205 313v8M1170 612v8M1155 655v8M1175 772v8M1178 850v5M1177 925v5M1172 945v5M1169 962v5M953 880v8M950 905v10M944 930v10M962 862v4M1456 536v8M1459 575v6M1460 605v6M1466 668v6M1466 720v4M1481 880v4" stroke="#9c998a" stroke-width="3"/>
  <rect x="964" y="84" width="345" height="960" fill="#ff5050" fill-opacity=".35"/>
  <rect x="968" y="97" width="339" height="934" fill="none" stroke="#ff5a5a" stroke-opacity=".5" stroke-width="5" vector-effect="non-scaling-stroke"/>
  <rect x="1086" y="322" width="71" height="130" fill="#b060e0" fill-opacity=".28"/>
  <rect x="1091" y="340" width="62" height="98" fill="none" stroke="#b060e0" stroke-opacity=".3" stroke-width="4" vector-effect="non-scaling-stroke"/>
  <path d="M1107 377h10v-25h8v25h10v19h-10v26h-8v-26h-10z" fill="#b44fd8"/>`;

@customElement("app-root")
export class AppRoot extends LitElement {
  @state() private section = 2;

  static styles = css`
    :host {
      display: block;
      height: 100vh;
      overflow: hidden;
      position: relative;
      background: #323232;
      color: #fff;
      font: 500 24px/32px Inter, "Noto Sans CJK KR", sans-serif;
    }
    * { box-sizing: border-box; }
    button, input, select { font: inherit; color: inherit; margin: 0; padding: 0; border: 0; background: none; outline: 0; }
    ul { list-style: none; margin: 0; padding: 0; }
    svg { display: block; flex: none; }
    .i48 { width: 48px; height: 48px; overflow: visible; }
    .i30 { width: 30px; height: 30px; overflow: visible; }
    .i28 { width: 28px; height: 28px; overflow: visible; }
    .i26 { width: 26px; height: 26px; }
    .i22 { width: 22px; height: 22px; }
    .window { display: flex; flex-direction: column; height: 100%; }

    .titlebar { position: relative; flex: none; height: 37px; padding: 0 50px 20px 0; display: flex; align-items: center; justify-content: center; overflow: hidden; background: #37343f; border-bottom: 1px solid #000; color: #b6b3bd; font-size: 25px; font-weight: 700; }
    .light { width: 24px; height: 24px; border-radius: 50%; background: #5b5863; }
    .lights { position: absolute; left: -4px; top: -4px; display: flex; gap: 16px; }

    .bar { flex: none; height: 78px; padding-bottom: 3px; border-bottom: 1px solid #7c7c7c; display: flex; align-items: center; gap: 4px; margin-left: -33px; background: linear-gradient(#333, #303030 94%, #262626); }
    .tool { flex: none; width: 62px; height: 61px; display: flex; align-items: center; justify-content: center; border-radius: 5px; }
    .tool.on { background: #252525; border: 2px solid #4c4c4c; box-shadow: 0 0 0 1px #222; }
    .tool.off { opacity: .28; }
    .grip { flex: none; width: 28px; height: 34px; padding-left: 15px; display: grid; grid-template-columns: 4px 4px; grid-auto-rows: 4px; gap: 2px; }
    .grip i { background: #8a8a8a; }
    .sep { flex: none; width: 2px; height: 38px; margin: 0 4px; border-left: 1px solid #272727; border-right: 1px solid #3a3a3a; }
    .menu { flex: none; width: 20px; height: 30px; display: flex; align-items: center; justify-content: center; }
    .tri { width: 0; height: 0; border: 7px solid transparent; border-bottom-width: 0; border-top: 9px solid #b5b5b5; }
    .tri.up { border-top: 0; border-bottom: 9px solid #b5b5b5; }
    .tri.left { border: 7px solid transparent; border-left: 0; border-right: 8px solid #b5b5b5; }
    .tri.right { border: 7px solid transparent; border-right: 0; border-left: 8px solid #b5b5b5; }

    .work { flex: 1; min-height: 0; display: flex; margin-top: 1px; }
    .dock { flex: none; display: flex; min-height: 0; }
    .dock.left { width: 542px; border-right: 1px solid #1c1c1c; }
    .dock.right { width: 596px; border-left: 1px solid #222; overflow: hidden; }
    .dockcol { flex: 1; min-width: 0; display: flex; flex-direction: column; }
    .split { flex: none; display: flex; align-items: center; justify-content: center; gap: 2px; }
    .split i { width: 4px; height: 4px; background: #8a8a8a; }
    .split.v { flex-direction: column; width: 13px; }
    .split.h { height: 16px; }
    .dockcol > .split.h { padding-right: 54px; }
    .dockhead { flex: none; height: 34px; display: flex; align-items: center; gap: 6px; padding-right: 3px; font-size: 20px; line-height: 28px; color: #e8e8e8; }
    .dockhead .name { flex: 1; white-space: nowrap; }
    .dockhead .cut { margin-left: -15px; }
    .minitools { flex: none; height: 65px; display: flex; align-items: center; gap: 22px; padding-left: 8px; }
    .minitools .tri { margin: 0 -4px 0 -8px; }
    .mini { display: flex; width: 28px; height: 28px; align-items: center; justify-content: center; }
    .tree { min-height: 0; overflow: hidden; background: #1e1e1e; border-top: 1px solid #262626; border-right: 1px solid #3a3a3a; }
    .tree.browser { flex: 783 1 0; }
    .tree.layers { flex: 617 1 0; }
    .row { height: 36px; display: flex; align-items: center; white-space: nowrap; }
    .browser .row { gap: 14px; margin-left: -10px; font-size: 25px; }
    .layers .row { gap: 12px; margin-left: -12px; background: #464646; font-size: 28px; font-weight: 700; text-decoration: underline; text-decoration-thickness: 3px; text-underline-offset: 4px; }
    .swatch { width: 32px; height: 32px; background: #b5a052; border: 1px solid #8b7b3d; }
    .check { appearance: none; flex: none; width: 28px; height: 26px; background: #1e1e1e; border: 1px solid #292929; border-radius: 2px; }
    .check:checked::after { content: ""; display: block; width: 18px; height: 18px; margin: 3px 4px; background: #d8d8d8; clip-path: polygon(0 55%, 14% 46%, 36% 74%, 84% 0, 100% 6%, 40% 100%, 30% 100%); }

    .canvas { flex: 1; min-width: 0; position: relative; background: #fff; overflow: hidden; }
    .canvas svg { position: absolute; inset: 0; width: 100%; height: 100%; }

    .find { display: flex; align-items: center; gap: 14px; background: #1e1e1e; border: 1px solid #292929; border-radius: 4px; }
    .find input { flex: 1; min-width: 0; height: 44px; }
    .find input::placeholder { color: #8c8c8c; opacity: 1; }
    .right .find { flex: none; height: 46px; padding-left: 16px; gap: 15px; }
    .right .dockhead { padding: 0 0 0 8px; margin-right: -10px; }
    .right .minitools { gap: 21px; padding-left: 19px; }
    .right .minitools .sep { height: 28px; margin: 0 -4px; }
    .toolbox { flex: 1; min-height: 0; display: flex; margin-top: 2px; margin-right: -12px; border: 1px solid #2a2a2a; border-bottom: 0; }
    .toolbox ul { flex: 1; overflow: hidden; background: #1e1e1e; }
    .toolbox .row { gap: 13px; padding-left: 88px; font-size: 25px; }
    .toolbox .row.hot { background: #464646; }

    .vbar { flex: none; width: 28px; display: flex; flex-direction: column; background: #383838; border-left: 1px solid #292929; }
    .hbar { flex: none; height: 28px; display: flex; background: #383838; border-top: 1px solid #292929; }
    .sb { flex: none; width: 27px; height: 26px; display: flex; align-items: center; justify-content: center; border: 2px solid #565656; background: #3e3e3e; }
    .thumb { border: 2px solid #565656; background: linear-gradient(#424242, #3c3c3c); }
    .hbar .thumb { margin: 0 2px; }
    .vbar .thumb { margin: 2px 0; }
    .gap1 { flex: 1; }

    .status { flex: none; height: 51px; padding: 8px 46px 0 0; display: flex; gap: 20px; align-items: stretch; background: linear-gradient(#333, #2c2c2c); border-top: 1px solid #242424; font-size: 22px; }
    .status .locate { width: 573px; padding-left: 5px; background: #1e1e1e; font-size: 25px; }
    .status .locate::placeholder { color: #8c8c8c; opacity: 1; }
    .push { flex: 1; }
    .grp { flex: none; display: flex; align-items: center; gap: 6px; white-space: nowrap; color: #e4e4e4; }
    .grp .field { flex: 1; min-width: 0; align-self: stretch; background: #1e1e1e; border: 1px solid #292929; border-radius: 4px 4px 0 0; display: flex; }
    .grp input.text, .grp select { flex: 1; width: 0; min-width: 0; padding-left: 9px; }
    .grp select { appearance: none; padding-left: 6px; }
    .g1 { width: 318px; } .g2 { width: 231px; } .g3 { width: 289px; } .g4 { width: 240px; } .g5 { width: 99px; } .g6 { width: 215px; }
    .g1 input.text { padding-left: 20px; }
    .g5 { margin-left: -6px; margin-right: 6px; gap: 8px; }
    .steps { flex: none; width: 28px; display: flex; flex-direction: column; align-items: center; justify-content: center; gap: 9px; background: #444; border: 1px solid #5a5a5a; }
    .steps button { display: flex; }
    .drop { flex: none; width: 40px; display: flex; align-items: center; justify-content: center; background: #444; border: 1px solid #555; }
    .drop .tri { border-top-color: #1a1a1a; }

    .dialog { position: absolute; left: 564px; top: 174px; right: 1006px; bottom: 248px; display: flex; flex-direction: column; border: 2px solid #6b6970; border-radius: 20px; background: #323232; background-clip: padding-box; box-shadow: 0 0 0 1px #000, 0 36px 110px 4px rgba(0, 0, 0, .68); }
    .dtitle { position: relative; flex: none; height: 55px; display: flex; align-items: center; justify-content: center; background: #37343f; border-bottom: 1px solid #000; border-radius: 18px 18px 0 0; color: #b6b3bd; font-size: 25px; font-weight: 700; }
    .dtitle .lights { left: 14px; top: 14px; }
    .red { background: #fc5753; } .green { background: #36ca40; }
    .dbody { flex: 1; min-height: 0; display: flex; }
    .side { flex: none; width: 298px; background: #444; border-radius: 0 0 0 18px; }
    .side .find { height: 47px; padding-left: 14px; margin-bottom: 12px; }
    .nav { width: 100%; height: 72px; padding-left: 7px; display: flex; align-items: center; gap: 17px; text-align: left; }
    .nav.cur { background: #303030; color: #000; padding-left: 13px; }
    .dbody > .split.v { width: 11px; }
    .pane { flex: 1; min-width: 0; display: flex; flex-direction: column; padding-bottom: 5px; }
    .gtitle { margin: 27px 0 5px 19px; font-weight: 500; font-size: 24px; line-height: 32px; }
    .group { flex: 1; min-height: 0; margin: 0 22px 0 18px; padding: 25px 23px 23px 20px; border: 2px solid #3e3e3e; border-radius: 4px; display: flex; flex-direction: column; }
    .group > .split.h { flex: none; height: 12px; }
    .line { display: flex; align-items: center; gap: 9px; color: #dcdcdc; font-size: 25px; }
    .line.filter { margin: 18px 0 14px; gap: 14px; font-size: 24px; }
    .line.filter .find { flex: 1; height: 47px; padding-left: 16px; }
    .cap { font-size: 24px; line-height: 32px; font-weight: 500; margin: 0; }
    .caprow { display: flex; justify-content: space-between; align-items: center; margin: 2px 0 17px; }
    .caprow .line { font-size: 17px; padding-right: 11px; gap: 10px; font-weight: 700; }
    .tablebox { flex: none; display: flex; flex-direction: column; border: 1px solid #262626; background: #1e1e1e; }
    .recent { height: 291px; margin-top: 12px; }
    .recent .fill { flex: 1; }
    .predef { height: 392px; }
    .predef .upper { flex: 1; min-height: 0; display: flex; background: #292929; }
    .predef .lower { display: flex; }
    .predef .lower .hbar { flex: 1; }
    .corner { width: 28px; background: #2c2c2c; }
    table { width: 100%; border-collapse: collapse; table-layout: fixed; font-size: 25px; align-self: flex-start; }
    .c1 { width: 832px; }
    th { height: 33px; padding: 0 0 0 5px; text-align: left; font-size: 21px; font-weight: 500; line-height: 30px; background: linear-gradient(#414141, #393939); border-top: 1px solid #565656; border-bottom: 2px solid #262626; }
    th + th { border-left: 1px solid #5a5a5a; }
    td { height: 32px; padding: 0 0 0 7px; line-height: 30px; white-space: nowrap; }
    td + td { padding-left: 9px; }
    .predef td { height: 36px; }
    .predef td:first-child { padding-left: 127px; }
    tr.alt td { background: #292929; }
    tr.base td { background: #1e1e1e; }
    tr.sel td { background: #0059d0; }
    tr.sel td:first-child { background: linear-gradient(#1b6bdb, #0a5fd6); }
    tr.hot td { background: #464646; }
    .bottom { flex: 1; min-height: 0; display: flex; gap: 16px; }
    .wkt { flex: none; width: 649px; display: flex; background: #1e1e1e; border: 1px solid #262626; }
    .wkt article { flex: 1; padding: 8px 0 0 8px; overflow: hidden; }
    .wkt h3 { margin: 0; font-size: 26px; line-height: 32px; }
    .wkt h4 { margin: 23px 0 0; font-size: 24px; line-height: 26px; }
    .wkt pre { margin: 0 0 0 60px; font: 22px/26px "DejaVu Sans Mono", monospace; }
    .extent { flex: 1; min-width: 0; background: #fff; height: 100%; }
    .actions { flex: none; display: flex; gap: 14px; padding-right: 5px; margin-top: 32px; }
    .btn { width: 158px; height: 46px; border: 2px solid #5a5a5a; border-radius: 4px; background: linear-gradient(#474747, #3e3e3e); box-shadow: 0 0 0 1px #262626; color: #e2e2e2; font-size: 25px; font-weight: 400; }
    .btn.ok { border-color: #5b9ce8; background: linear-gradient(#535965, #454a55); }
    .tip { position: absolute; left: 265px; top: 195px; width: 102px; height: 41px; display: flex; align-items: center; justify-content: center; font-size: 21px; color: #ececec; background: linear-gradient(#5c5c5c, #6c6c6c); border: 2px solid #eee; box-shadow: 0 0 0 1px #000, 0 8px 24px rgba(0, 0, 0, .5); }
  `;

  private dots(n: number) {
    return Array.from({ length: n }, () => html`<i></i>`);
  }

  private bar(tools: Tool[]) {
    return html`<div class="bar" role="toolbar">
      ${tools.map(([kind, art, label]) => {
        if (kind === "grip") return html`<span class="grip">${this.dots(12)}</span>`;
        if (kind === "sep") return html`<span class="sep"></span>`;
        if (kind === "menu") return html`<button class="menu" aria-label="Menu"><span class="tri"></span></button>`;
        return html`<button class=${classMap({ tool: true, on: kind === "on", off: kind === "off" })} aria-label=${label ?? ""}>${icon(art!)}</button>`;
      })}
    </div>`;
  }

  private mini(names: string[]) {
    return names.map((n) =>
      n === "|" ? html`<span class="sep"></span>` : html`<button class="mini" aria-label=${n}>${icon(n, "i28")}</button>`,
    );
  }

  private vbar(before: number, size: number, after: number) {
    return html`<div class="vbar">
      <button class="sb" aria-label="Scroll up"><span class="tri up"></span></button>
      <div style="flex:${before} 1 0"></div>
      <div class="thumb" style="flex:${size} 1 0"></div>
      <div style="flex:${after} 1 0"></div>
      <button class="sb" aria-label="Scroll down"><span class="tri"></span></button>
    </div>`;
  }

  private hbar(size: number, after: number) {
    return html`<div class="hbar">
      <button class="sb" aria-label="Scroll left"><span class="tri left"></span></button>
      <div class="thumb" style="flex:${size} 1 0"></div>
      <div style="flex:${after} 1 0"></div>
      <button class="sb" aria-label="Scroll right"><span class="tri right"></span></button>
    </div>`;
  }

  private crsTable(rows: [string, string][], cls: (i: number) => string) {
    return html`<table>
      <colgroup><col class="c1" /><col /></colgroup>
      <thead><tr><th scope="col">좌표계</th><th scope="col">권한 ID</th></tr></thead>
      <tbody>${rows.map(([name, id], i) => html`<tr class=${cls(i)}><td>${name}</td><td>${id}</td></tr>`)}</tbody>
    </table>`;
  }

  private panelButtons() {
    return html`<button aria-label="Float">${icon("float", "i22")}</button><button aria-label="Close">${icon("close", "i22")}</button>`;
  }

  private leftDock() {
    return html`<aside class="dock left">
      <div class="dockcol">
        <header class="dockhead"><span class="name cut">기</span>${this.panelButtons()}</header>
        <div class="minitools">${this.mini(["refresh", "filter", "collapse", "info"])}</div>
        <ul class="tree browser">${BROWSER.map(([a, t]) => html`<li class="row">${icon(a, "i28")}<span>${t}</span></li>`)}</ul>
        <div class="split h">${this.dots(6)}</div>
        <header class="dockhead"><span class="name cut">어</span>${this.panelButtons()}</header>
        <div class="minitools">${this.mini(["addGroup", "eye", "filter", "exprFilter"])}<span class="tri"></span>${this.mini(["expand", "collapse", "removeLayer"])}</div>
        <ul class="tree layers">
          <li class="row"><input class="check" type="checkbox" id="layer" checked /><span class="swatch"></span><label for="layer">LSMD_ADM_SECT_UMD_43</label></li>
        </ul>
      </div>
      <div class="split v">${this.dots(6)}</div>
    </aside>`;
  }

  private rightDock() {
    return html`<aside class="dock right">
      <div class="split v">${this.dots(6)}</div>
      <div class="dockcol">
        <header class="dockhead"><span class="name">공간 처리 툴박스</span>${this.panelButtons()}</header>
        <div class="minitools">${this.mini(["models", "pythonMenu", "plainClock", "doc", "|", "noteEdit", "|", "wrench"])}</div>
        <div class="find">${icon("search", "i26")}<input type="search" placeholder="검색..." aria-label="검색" /></div>
        <div class="toolbox">
          <ul>${TOOLBOX.map(([a, t], i) => html`<li class=${classMap({ row: true, hot: i === 4 })}>${icon(a, "i30")}<span>${t}</span></li>`)}</ul>
          ${this.vbar(282, 536, 590)}
        </div>
      </div>
    </aside>`;
  }

  private statusBar() {
    const steps = html`<span class="steps"><button aria-label="Increase"><span class="tri up"></span></button><button aria-label="Decrease"><span class="tri"></span></button></span>`;
    return html`<footer class="status">
      <input class="locate" type="text" placeholder="위치를 찾으려면 입력하세요 (⌘K)" aria-label="위치" />
      <span class="push"></span>
      <div class="grp g1"><label for="pos">좌표</label><span class="field"><input class="text" id="pos" value="978304,1828780" /></span>${icon("mouse", "i30")}</div>
      <div class="grp g2"><label for="scale">축척</label><span class="field"><select id="scale"><option>1:1020024</option></select><span class="drop"><span class="tri"></span></span></span></div>
      <div class="grp g3">${icon("lock", "i30")}<label for="mag">확대경</label><span class="field"><input class="text" id="mag" value="100%" />${steps}</span></div>
      <div class="grp g4"><label for="rot">회전</label><span class="field"><input class="text" id="rot" value="0.0 °" />${steps}</span></div>
      <div class="grp g5"><input class="check" type="checkbox" id="render" checked /><label for="render">렌더링</label></div>
      <div class="grp g6">${icon("graticule", "i28")}<span>알 수 없는 좌표계</span></div>
      <div class="grp">${icon("bubble", "i30")}</div>
    </footer>`;
  }

  private dialog() {
    return html`<section class="dialog" role="dialog" aria-label="프로젝트 속성">
      <header class="dtitle"><span class="lights"><i class="light red"></i><i class="light"></i><i class="light green"></i></span>프로젝트 속성 — 좌표계</header>
      <div class="dbody">
        <nav class="side">
          <div class="find">${icon("search", "i26")}<input type="text" aria-label="설정 검색" /></div>
          ${SECTIONS.map(([a, t], i) => html`<button class=${classMap({ nav: true, cur: i === this.section })} @click=${() => (this.section = i)}>${icon(a)}<span>${t}</span></button>`)}
        </nav>
        <div class="split v">${this.dots(6)}</div>
        <div class="pane">
          <h2 class="gtitle">프로젝트 좌표계</h2>
          <div class="group">
            <div class="line"><input class="check" type="checkbox" id="nocrs" /><label for="nocrs">좌표계 없음 (또는 알 수 없는 좌표계)</label></div>
            <div class="line filter"><label for="crsfilter">필터</label><div class="find">${icon("search", "i26")}<input id="crsfilter" type="text" /></div></div>
            <h3 class="cap">최근 사용된 좌표계</h3>
            <div class="tablebox recent">
              ${this.crsTable(RECENT, (i) => (i === 0 ? "sel" : i % 2 ? "alt" : "base"))}
              <div class="fill"></div>
              ${this.hbar(1, 0)}
            </div>
            <div class="split h">${this.dots(6)}</div>
            <div class="caprow">
              <h3 class="cap">미리 정의된 좌표계</h3>
              <div class="line"><input class="check" type="checkbox" id="hide" /><label for="hide">폐기 예정인 좌표계 숨기기</label></div>
            </div>
            <div class="tablebox predef">
              <div class="upper">${this.crsTable(PREDEFINED, (i) => (i === 8 ? "hot" : i % 2 ? "alt" : "base"))}${this.vbar(105, 52, 152)}</div>
              <div class="lower">${this.hbar(1198, 30)}<span class="corner"></span></div>
            </div>
            <div class="split h">${this.dots(6)}</div>
            <div class="bottom">
              <div class="wkt">
                <article><h3>Korea 2000 / Unified CS</h3><h4>WKT</h4><pre>${WKT}</pre></article>
                ${this.vbar(0, 62, 228)}
              </div>
              <svg class="extent" viewBox="784 48 706 1032" preserveAspectRatio="none" role="img" aria-label="Extent">${COAST}</svg>
            </div>
          </div>
          <div class="actions">
            <button class="btn">Help</button><button class="btn">Apply</button><span class="gap1"></span><button class="btn">Cancel</button><button class="btn ok">OK</button>
          </div>
        </div>
      </div>
      <div class="tip" role="tooltip">일반 설정</div>
    </section>`;
  }

  render() {
    return html`<div class="window">
        <header class="titlebar"><span class="lights"><i class="light"></i><i class="light"></i></span>*제목 없는 프로젝트 — QGIS</header>
        ${this.bar(BAR1)}${this.bar(BAR2)}${this.bar(BAR3)}
        <main class="work">
          ${this.leftDock()}
          <div class="canvas"><svg role="img" aria-label="Map">${DISTRICTS}</svg></div>
          ${this.rightDock()}
        </main>
        ${this.statusBar()}
      </div>
      ${this.dialog()}`;
  }
}
